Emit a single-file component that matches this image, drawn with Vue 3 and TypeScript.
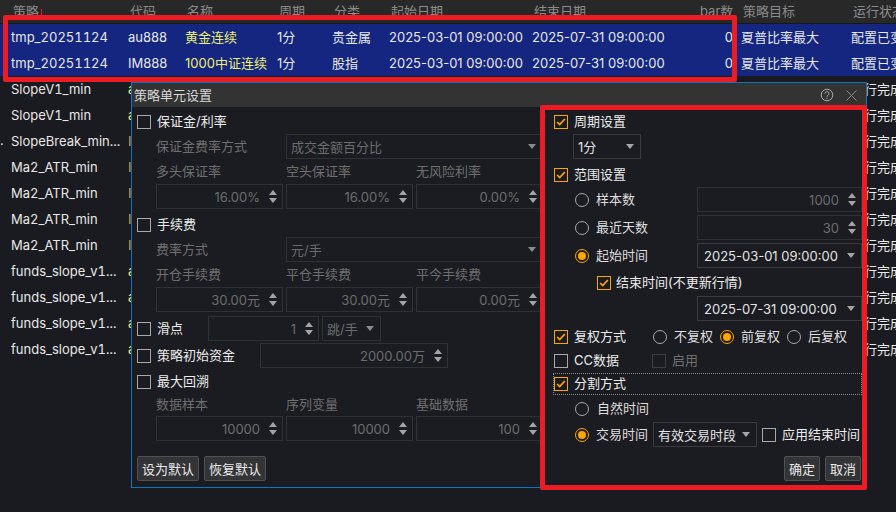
<script setup lang="ts">
interface Row { pre?: string; strategy: string; code: string; codeCls: string; name: string; period: string; cat: string; start: string; end: string; bar: string; target: string; status: string; sel?: boolean }
const base = { period: '1分', start: '2025-03-01 09:00:00', end: '2025-07-31 09:00:00', bar: '0', target: '夏普比率最大' }
const mk = (strategy: string, code: string, name: string, cat: string, pre = ''): Row => ({
  ...base, pre, strategy, code, codeCls: code.startsWith('a') ? 'yellow' : 'orange', name, cat, status: '运行完成'
})
const rows: Row[] = [
  { ...mk('tmp_20251124', 'au888', '黄金连续', '贵金属'), codeCls: '', status: '配置已变更', sel: true },
  { ...mk('tmp_20251124', 'IM888', '1000中证连续', '股指'), codeCls: '', status: '配置已变更', sel: true },
  mk('SlopeV1_min', 'au888', '黄金连续', '贵金属'),
  mk('SlopeV1_min', 'au888', '黄金连续', '贵金属'),
  mk('SlopeBreak_min...', 'IM888', '1000中证连续', '股指', '.'),
  mk('Ma2_ATR_min', 'IM888', '1000中证连续', '股指'),
  mk('Ma2_ATR_min', 'IM888', '1000中证连续', '股指'),
  mk('Ma2_ATR_min', 'IM888', '1000中证连续', '股指'),
  mk('Ma2_ATR_min', 'IM888', '1000中证连续', '股指'),
  mk('funds_slope_v1...', 'au888', '黄金连续', '贵金属'),
  mk('funds_slope_v1...', 'au888', '黄金连续', '贵金属'),
  mk('funds_slope_v1...', 'au888', '黄金连续', '贵金属'),
  mk('funds_slope_v1...', 'au888', '黄金连续', '贵金属')
]
const marginFields = [
  { label: '多头保证率', value: '16.00%' }, { label: '空头保证率', value: '16.00%' }, { label: '无风险利率', value: '0.00%' }
]
const feeFields = [
  { label: '开仓手续费', value: '30.00元' }, { label: '平仓手续费', value: '30.00元' }, { label: '平今手续费', value: '0.00元' }
]
const ddFields = [
  { label: '数据样本', value: '10000' }, { label: '序列变量', value: '10000' }, { label: '基础数据', value: '100' }
]
</script>

<template>
  <div class="page">
    <div class="thead">
      <span class="pre"></span>
      <span class="h">策略<i class="sort"></i></span>
      <span class="h">代码</span>
      <span class="h">名称</span>
      <span class="h">周期</span>
      <span class="h">分类</span>
      <span class="h">起始日期</span>
      <span class="h">结束日期</span>
      <span class="h barh">bar数</span>
      <span class="h">策略目标</span>
      <span class="h">运行状态</span>
    </div>
    <div v-for="(r, i) in rows" :key="i" class="trow" :class="{ sel: r.sel }">
      <span class="pre">{{ r.pre }}</span>
      <span class="c tnum">{{ r.strategy }}</span>
      <span class="c" :class="r.codeCls">{{ r.code }}</span>
      <span class="c yellow">{{ r.name }}</span>
      <span class="c">{{ r.period }}</span>
      <span class="c">{{ r.cat }}</span>
      <span class="c">{{ r.start }}</span>
      <span class="c">{{ r.end }}</span>
      <span class="c bar">{{ r.bar }}</span>
      <span class="c">{{ r.target }}</span>
      <span class="c">{{ r.status }}</span>
    </div>

    <section class="dialog">
      <header class="title">
        <span class="t">策略单元设置</span>
        <span class="title-icons">
          <svg width="14" height="14" viewBox="0 0 14 14" fill="none" stroke="#a8a8a8" stroke-width="1">
            <circle cx="7" cy="7" r="5.8" />
            <path d="M5 5.6a2 2 0 1 1 3 1.7c-.7.4-1 .8-1 1.5" />
            <path d="M7 9.8v1.2" />
          </svg>
          <svg width="13" height="13" viewBox="0 0 13 13" fill="none" stroke="#8c8c8c" stroke-width="1">
            <path d="M1.5 1.5l10 10M11.5 1.5l-10 10" />
          </svg>
        </span>
      </header>
      <div class="body">
        <div class="left">
          <div class="row"><i class="box"></i><span class="lbl">保证金/利率</span></div>
          <div class="row indent">
            <span class="dim w130">保证金费率方式</span>
            <div class="combo grow off"><span class="t">成交金额百分比</span><i class="tri"></i></div>
          </div>
          <div class="tri-grid heads mt1"><span v-for="f in marginFields" :key="f.label" class="dim">{{ f.label }}</span></div>
          <div class="tri-grid">
            <div v-for="f in marginFields" :key="f.label" class="spin off"><span class="t">{{ f.value }}</span><i class="arrows"></i></div>
          </div>

          <div class="row mt3"><i class="box"></i><span class="lbl">手续费</span></div>
          <div class="row indent">
            <span class="dim w130">费率方式</span>
            <div class="combo grow off"><span class="t">元/手</span><i class="tri"></i></div>
          </div>
          <div class="tri-grid heads mt1"><span v-for="f in feeFields" :key="f.label" class="dim">{{ f.label }}</span></div>
          <div class="tri-grid">
            <div v-for="f in feeFields" :key="f.label" class="spin off"><span class="t">{{ f.value }}</span><i class="arrows"></i></div>
          </div>

          <div class="row mt4">
            <i class="box"></i><span class="lbl w-slip">滑点</span>
            <div class="spin off w-slipv"><span class="t">1</span><i class="arrows"></i></div>
            <div class="combo off w-unit"><span class="t">跳/手</span><i class="tri"></i></div>
          </div>
          <div class="row mt2">
            <i class="box"></i><span class="lbl w-cap">策略初始资金</span>
            <div class="spin off w-capv"><span class="t">2000.00万</span><i class="arrows"></i></div>
          </div>
          <div class="row mt2 h23"><i class="box"></i><span class="lbl">最大回溯</span></div>
          <div class="tri-grid heads h23"><span v-for="f in ddFields" :key="f.label" class="dim">{{ f.label }}</span></div>
          <div class="tri-grid">
            <div v-for="f in ddFields" :key="f.label" class="spin off"><span class="t">{{ f.value }}</span><i class="arrows"></i></div>
          </div>
          <div class="btns">
            <button class="btn w62">设为默认</button>
            <button class="btn w62">恢复默认</button>
          </div>
        </div>

        <div class="right">
          <div class="row"><i class="box on"><svg viewBox="0 0 14 14" width="12" height="12"><path d="M2.5 7l3 3 6-6.5" fill="none" stroke="#ffa500" stroke-width="2" /></svg></i><span class="lbl">周期设置</span></div>
          <div class="row pad19"><div class="combo w-period"><span class="t">1分</span><i class="tri"></i></div></div>

          <div class="row mt3"><i class="box on"><svg viewBox="0 0 14 14" width="12" height="12"><path d="M2.5 7l3 3 6-6.5" fill="none" stroke="#ffa500" stroke-width="2" /></svg></i><span class="lbl">范围设置</span></div>
          <div class="row pad21">
            <i class="radio"></i><span class="rlbl w101">样本数</span>
            <div class="spin off w165"><span class="t">1000</span><i class="arrows"></i></div>
          </div>
          <div class="row pad21 mt3">
            <i class="radio"></i><span class="rlbl w101">最近天数</span>
            <div class="spin off w165"><span class="t">30</span><i class="arrows"></i></div>
          </div>
          <div class="row pad21 mt3">
            <i class="radio on"></i><span class="rlbl w101">起始时间</span>
            <div class="combo w165 date"><span class="t">2025-03-01 09:00:00</span><i class="tri"></i></div>
          </div>
          <div class="row pad43 mt2"><i class="box on"><svg viewBox="0 0 14 14" width="12" height="12"><path d="M2.5 7l3 3 6-6.5" fill="none" stroke="#ffa500" stroke-width="2" /></svg></i><span class="lbl gap5">结束时间(不更新行情)</span></div>
          <div class="row end mt1"><div class="combo w165 date"><span class="t">2025-07-31 09:00:00</span><i class="tri"></i></div></div>

          <div class="row h24 mt4">
            <i class="box on"><svg viewBox="0 0 14 14" width="12" height="12"><path d="M2.5 7l3 3 6-6.5" fill="none" stroke="#ffa500" stroke-width="2" /></svg></i><span class="lbl w79">复权方式</span>
            <i class="radio"></i><span class="rlbl w46">不复权</span>
            <i class="radio on"></i><span class="rlbl w46">前复权</span>
            <i class="radio"></i><span class="rlbl">后复权</span>
          </div>
          <div class="row h24">
            <i class="box"></i><span class="lbl w78">CC数据</span>
            <i class="box dis"></i><span class="lbl dim gap6">启用</span>
          </div>
          <div class="row focus"><i class="box on"><svg viewBox="0 0 14 14" width="12" height="12"><path d="M2.5 7l3 3 6-6.5" fill="none" stroke="#ffa500" stroke-width="2" /></svg></i><span class="lbl">分割方式</span></div>
          <div class="row h24 pad21 mt2"><i class="radio"></i><span class="rlbl gap1">自然时间</span></div>
          <div class="row pad21 mt1">
            <i class="radio on"></i><span class="rlbl w57">交易时间</span>
            <div class="combo w-seg"><span class="t">有效交易时段</span><i class="tri"></i></div>
            <i class="box ml5"></i><span class="lbl gap6">应用结束时间</span>
          </div>
          <div class="btns rt">
            <button class="btn w36">确定</button>
            <button class="btn w36">取消</button>
          </div>
        </div>
      </div>
    </section>

    <div class="mark m1"></div>
    <div class="mark m2"></div>
  </div>
</template>

<style scoped>
.page {
  position: relative;
  width: 896px;
  height: 512px;
  overflow: hidden;
  background: #1a1b20;
  color: #e8e8e8;
  font: 13px/1.2 Inter, "Noto Sans CJK SC", sans-serif;
}
.thead, .trow {
  display: grid;
  grid-template-columns: 9px 117px 57px 92px 55px 57px 143px 167px 42px 110px 60px;
  width: 896px;
  overflow: hidden;
  align-items: center;
  white-space: nowrap;
}
.thead { height: 23px; background: #282829; border-bottom: 1px solid #17181b; color: #8b8b8b; }
.trow { height: 26px; }
.trow.sel { background: #14267f; }
.pre { color: #ddd; }
.h { padding-left: 4px; position: relative; }
.barh { padding-left: 3px; }
.sort { position: absolute; left: 32px; top: 5px; width: 1px; height: 9px; background: #d8232a; }
.c { padding: 2px 0 0 2px; overflow: hidden; }
.tnum { font-variant-numeric: tabular-nums; }
.bar { text-align: right; padding-right: 6px; }
.yellow { color: #eeee72; }
.orange { color: #d6a04a; }

.t { padding-top: 2px; }

.dialog {
  position: absolute;
  left: 131px;
  top: 82px;
  width: 736px;
  height: 406px;
  box-sizing: border-box;
  border: 1px solid #0a76c4;
  background: #1b1c21;
  display: flex;
  flex-direction: column;
}
.title {
  height: 24px;
  flex: none;
  background: #333334;
  display: flex;
  align-items: center;
  justify-content: space-between;
  padding: 0 8px 0 2px;
  color: #d8d8d8;
}
.title-icons { display: flex; align-items: center; gap: 11px; }
.body { flex: 1; display: flex; padding-top: 2px; }
.left { width: 411px; box-sizing: border-box; padding-left: 5px; flex: none; }
.right { width: 308px; margin-left: 11px; flex: none; }
.row { display: flex; align-items: center; height: 25px; }
.indent { padding-left: 19px; }
.pad19 { padding-left: 19px; }
.pad21 { padding-left: 21px; }
.pad43 { padding-left: 43px; }
.end { justify-content: flex-end; }
.mt1 { margin-top: 1px; }
.mt2 { margin-top: 2px; }
.mt3 { margin-top: 3px; }
.mt4 { margin-top: 4px; }
.h23 { height: 23px; }
.h24 { height: 24px; }
.box {
  box-sizing: content-box;
  flex: none;
  border: 1px solid #a9a9a9;
  width: 12px;
  height: 12px;
  display: inline-flex;
  align-items: center;
  justify-content: center;
}
.box.on { border-color: #ffa500; }
.box.dis { border-color: #3e3e3e; }
.ml5 { margin-left: 5px; }
.lbl { margin-left: 6px; color: #ececec; }
.lbl.dim { color: #6f6f6f; }
.gap1 { margin-left: 1px; }
.gap5 { margin-left: 5px; }
.gap6 { margin-left: 6px; }
.dim { color: #6f6f6f; }
.w130 { width: 130px; flex: none; }
.tri-grid {
  display: grid;
  grid-template-columns: repeat(3, 127px);
  column-gap: 3px;
  margin-left: 19px;
  height: 25px;
}
.heads { height: 24px; align-items: center; }
.heads.h23 { height: 23px; }
.combo, .spin {
  height: 25px;
  box-sizing: border-box;
  border: 1px solid #3a3b3e;
  display: flex;
  align-items: center;
  white-space: nowrap;
  flex: none;
}
.combo { justify-content: space-between; padding: 0 6px 0 4px; color: #e4e4e4; }
.date { padding-left: 6px; }
.spin { justify-content: flex-end; gap: 9px; padding-right: 5px; color: #e4e4e4; }
.off { color: #6c6c6c; border-color: #303135; }
.grow { flex: 1; min-width: 0; }
.tri { width: 0; height: 0; border-left: 4px solid transparent; border-right: 4px solid transparent; border-top: 5px solid #a6a6a6; flex: none; }
.off .tri { border-top-color: #8a8a8a; }
.arrows { position: relative; width: 8px; height: 17px; flex: none; }
.arrows::before, .arrows::after { content: ""; position: absolute; left: 0; width: 0; height: 0; border-left: 4px solid transparent; border-right: 4px solid transparent; }
.arrows::before { top: 2px; border-bottom: 5px solid #a4a4a4; }
.arrows::after { bottom: 2px; border-top: 5px solid #a4a4a4; }
.w-slip { width: 51px; flex: none; }
.w-slipv { width: 111px; }
.w-unit { width: 59px; margin-left: 3px; }
.w-cap { width: 103px; flex: none; }
.w-capv { width: 188px; }
.w-period { width: 68px; }
.w165 { width: 165px; }
.w-seg { width: 104px; }
.w79 { width: 79px; flex: none; }
.w78 { width: 78px; flex: none; }
.w101 { width: 101px; flex: none; }
.w46 { width: 46px; flex: none; }
.w57 { width: 57px; flex: none; }
.radio {
  width: 14px;
  height: 14px;
  border-radius: 50%;
  border: 1px solid #a9a9a9;
  box-sizing: border-box;
  flex: none;
  position: relative;
  margin-right: 7px;
}
.radio.on { border-color: #ffa500; }
.radio.on::after { content: ""; position: absolute; left: 2px; top: 2px; width: 8px; height: 8px; border-radius: 50%; background: #ffa500; }
.rlbl { color: #dedede; }
.focus {
  height: 22px;
  box-sizing: border-box;
  width: 309px;
  margin-left: -1px;
  border: 1px dotted #8a8a8a;
}
.btns { display: flex; gap: 5px; margin-top: 15px; }
.btns.rt { justify-content: flex-end; margin-top: 9px; padding-right: 1px; }
.btn {
  height: 25px;
  box-sizing: border-box;
  padding: 2px 0 0;
  background: #333436;
  border: 1px solid #505153;
  border-radius: 2px;
  color: #eaeaea;
  font: inherit;
}
.w62 { width: 62px; }
.w36 { width: 36px; }
.mark {
  position: absolute;
  box-sizing: border-box;
  border: 5px solid #ed1c24;
  border-radius: 2px;
  pointer-events: none;
}
.m1 { left: 3px; top: 15px; width: 734px; height: 67px; }
.m2 { left: 540px; top: 105px; width: 327px; height: 385px; }
</style>
